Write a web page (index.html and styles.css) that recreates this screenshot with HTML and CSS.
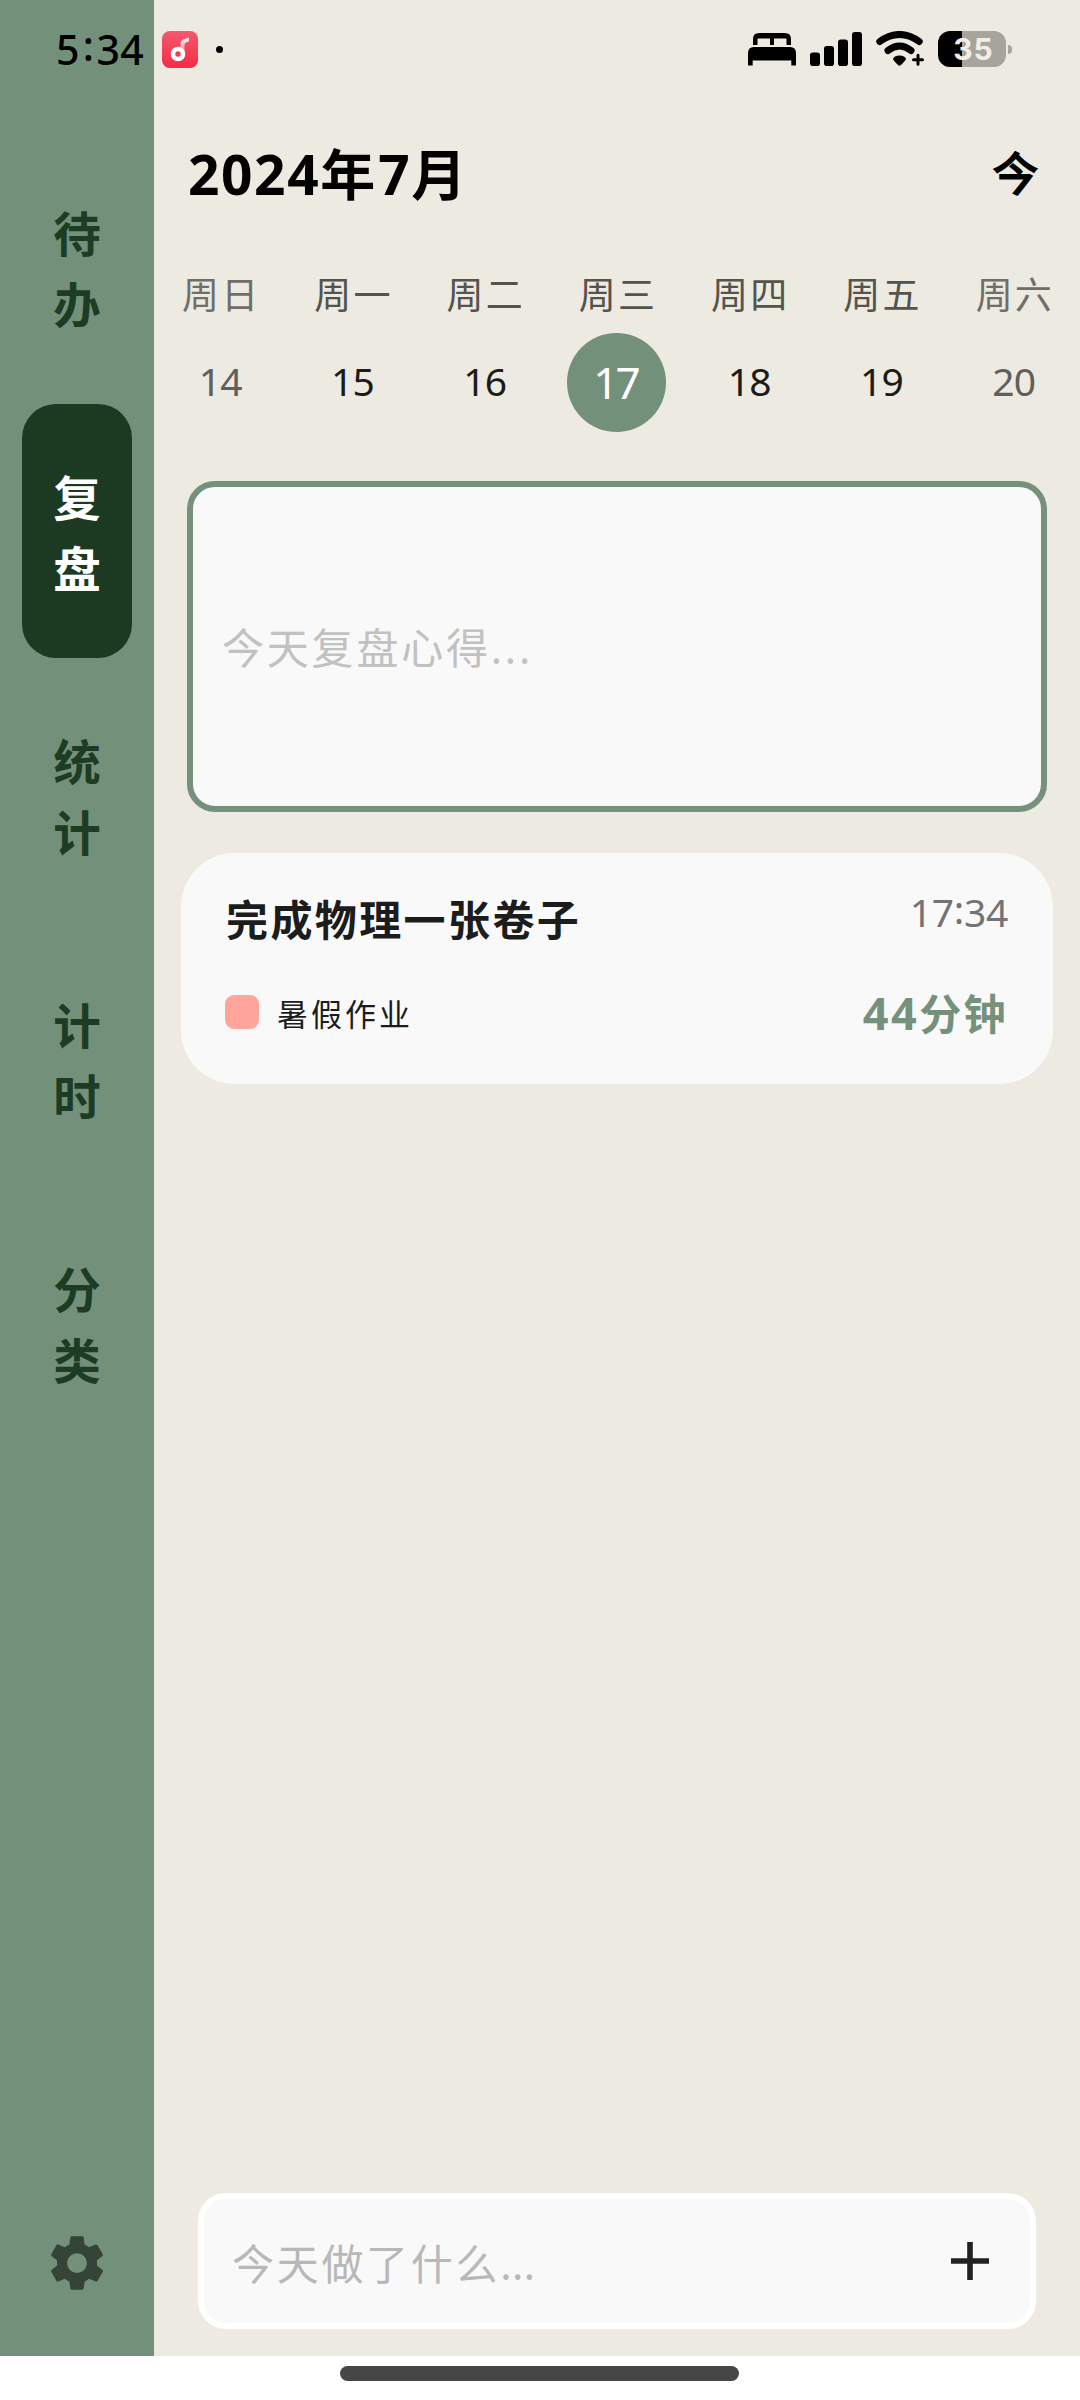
FILE: index.html
```html
<!DOCTYPE html>
<html lang="zh-CN">
<head>
<meta charset="utf-8">
<title>复盘</title>
<link rel="stylesheet" href="styles.css">
</head>
<body>
<div class="app">
  <div class="status">
    <span class="clock">5<span class="colon">:</span>34</span>
    <svg class="music" width="36" height="37" viewBox="0 0 36 37">
      <defs>
        <linearGradient id="red" x1="0" y1="0" x2="0" y2="1"><stop offset="0" stop-color="#f25a6c"/><stop offset="1" stop-color="#f52a48"/></linearGradient>
        <linearGradient id="stem" x1="0" y1="0" x2="0" y2="1"><stop offset="0" stop-color="#fff"/><stop offset="1" stop-color="#f88"/></linearGradient>
      </defs>
      <rect width="36" height="37" rx="8" fill="url(#red)"/>
      <path d="M18.500 18V13.500Q18.500 8.500 23 8L27 6.500V10.500L24 11.500Q22.500 12 22.500 14V20Z" fill="url(#stem)"/>
      <circle cx="16" cy="23" r="5" fill="none" stroke="#fff" stroke-width="4.600"/>
    </svg>
    <span class="dot"></span>
    <span class="spacer"></span>
    <svg class="bed" width="48" height="33" viewBox="0 0 48 33">
      <path d="M5 12V6Q5 0 11 0H37Q43 0 43 6V12H38.500V6.500Q38.500 5.500 37.500 5.500H26V12H22V5.500H10.500Q9.500 5.500 9.500 6.500V12Z"/>
      <path d="M0 32.500V20Q0 14 6 14H42Q48 14 48 20V32.500H43.300V27.500H4.700V32.500Z"/>
    </svg>
    <svg class="signal" width="52" height="34" viewBox="0 0 52 34">
      <rect y="20.500" width="10" height="13.500" rx="2.800"/><rect x="14" y="14" width="10" height="20" rx="2.800"/><rect x="28" y="7.500" width="10" height="26.500" rx="2.800"/><rect x="42" width="10" height="34" rx="2.800"/>
    </svg>
    <svg class="wifi" width="48" height="36" viewBox="0 0 48 36">
      <path d="M3.800 10.500Q23.500-3.500 43.200 10.500M12 19.500Q23.500 10.500 35 19.500" fill="none" stroke="#000" stroke-width="7" stroke-linecap="round"/>
      <path d="M17 28Q18 24.500 23.500 24.500Q29 24.500 30 28Q29.500 29.500 25 34Q23.500 35.500 22 34Q17.500 29.500 17 28Z"/>
      <path d="M37.500 28.800H46.500M42 24.300V33.300" stroke="#000" stroke-width="3" stroke-linecap="round"/>
    </svg>
    <span class="battery"><span class="level">35</span><span class="nub"></span></span>
  </div>

  <div class="body">
    <nav class="side">
      <a class="tab">待<br>办</a>
      <a class="tab active">复<br>盘</a>
      <a class="tab">统<br>计</a>
      <a class="tab">计<br>时</a>
      <a class="tab">分<br>类</a>
      <svg class="gear" width="64" height="64" viewBox="0 0 24 24"><path d="M19.430 12.980c.04-.32.07-.64.07-.98s-.03-.66-.07-.98l2.110-1.650c.19-.15.24-.42.12-.64l-2-3.460c-.12-.22-.39-.3-.61-.22l-2.490 1c-.52-.4-1.080-.73-1.690-.98l-.38-2.650C14.460 2.180 14.250 2 14 2h-4c-.25 0-.46.18-.49.42l-.38 2.650c-.61.25-1.170.59-1.690.98l-2.490-1c-.23-.09-.49 0-.61.22l-2 3.460c-.13.22-.07.49.12.64l2.110 1.650c-.04.32-.07.65-.07.98s.03.66.07.98l-2.110 1.650c-.19.15-.24.42-.12.64l2 3.460c.12.22.39.3.61.22l2.490-1c.52.4 1.080.73 1.690.98l.38 2.650c.03.24.24.42.49.42h4c.25 0 .46-.18.49-.42l.38-2.650c.61-.25 1.170-.59 1.690-.98l2.490 1c.23.09.49 0 .61-.22l2-3.460c.12-.22.07-.49-.12-.64l-2.110-1.650zM12 15.700c-2.040 0-3.700-1.660-3.700-3.700s1.660-3.700 3.700-3.700 3.700 1.660 3.700 3.700-1.660 3.700-3.700 3.700z"/></svg>
    </nav>

    <main class="main">
      <header class="head"><h1 class="month">2024<span class="unit">年</span>7<span class="unit">月</span></h1><span class="today">今</span></header>
      <div class="week">
        <div class="day off"><span class="name">周日</span><span class="num">14</span></div>
        <div class="day"><span class="name">周一</span><span class="num">15</span></div>
        <div class="day"><span class="name">周二</span><span class="num">16</span></div>
        <div class="day on"><span class="name">周三</span><span class="num">17</span></div>
        <div class="day"><span class="name">周四</span><span class="num">18</span></div>
        <div class="day"><span class="name">周五</span><span class="num">19</span></div>
        <div class="day off"><span class="name">周六</span><span class="num">20</span></div>
      </div>
      <div class="memo">今天复盘心得...</div>
      <section class="card">
        <div class="row top"><span class="task">完成物理一张卷子</span><span class="time">17<span class="colon">:</span>34</span></div>
        <div class="row"><span class="swatch"></span><span class="cat">暑假作业</span><span class="length"><span class="mins">44</span>分钟</span></div>
      </section>
      <div class="entry"><span>今天做了什么<span class="dots">...</span></span>
        <svg width="38" height="38" viewBox="0 0 38 38"><path d="M19 0V38M0 19H38" stroke="#212121" stroke-width="5.600"/></svg>
      </div>
    </main>
  </div>
  <footer class="home"><span class="handle"></span></footer>
</div>
</body>
</html>
```
FILE: styles.css
```css
* { box-sizing: border-box; }
body {
  margin: 0;
  background: #fff;
  font-family: "Noto Sans", "Noto Sans CJK SC", sans-serif;
}
.app { position: relative; width: 1080px; height: 2400px; display: flex; flex-direction: column; }
svg { display: block; flex: none; }
.colon { position: relative; top: -0.09em; }

/* status bar, over both columns */
.status {
  position: absolute; left: 0; top: 0; z-index: 1;
  width: 1080px; height: 98px; padding: 0 68px 0 55px;
  display: flex; align-items: center;
}
.clock { width: 107px; padding-left: 1px; font-size: 41px; line-height: 60px; font-weight: 500; letter-spacing: 0.4px; white-space: nowrap; }
.clock .colon { margin: 0 2px 0 3px; }
.dot { width: 7px; height: 7px; margin-left: 18px; border-radius: 50%; background: #000; }
.spacer { flex: 1; }
.signal { margin-left: 14px; }
.wifi { margin-left: 14px; }
.battery { display: flex; align-items: center; gap: 2px; margin-left: 14px; }
.level {
  width: 68px; height: 36px; border-radius: 12px;
  background: linear-gradient(90deg, #000 24px, #a6a49d 24px);
  color: #f0eee6; font: 700 30px/37px Inter, sans-serif; text-align: center;
  letter-spacing: 1px; padding-left: 3px;
}
.nub { width: 4px; height: 9px; border-radius: 0 5px 5px 0; background: #a6a49d; }

.body { height: 2356px; display: flex; }

/* sidebar */
.side {
  width: 154px; height: 100%; padding: 140px 0 61px;
  background: #73907a;
  display: flex; flex-direction: column; align-items: center; gap: 10px;
}
.tab {
  width: 110px; height: 254px; padding-top: 3px; border-radius: 34px;
  display: flex; align-items: center; justify-content: center;
  font-size: 47.5px; line-height: 71px; font-weight: 700; color: #1c3c23;
}
.tab.active { background: #1c3a22; color: #fff; }
.gear { margin-top: auto; fill: #344437; }

/* content */
.main { width: 926px; height: 100%; background: #eceae1; display: flex; flex-direction: column; }
.head { display: flex; justify-content: space-between; padding: 144px 42px 0 34px; height: 275px; }
.month { margin: 0; font-size: 55px; line-height: 60px; font-weight: 700; letter-spacing: 1.6px; }
.unit { letter-spacing: 3px; }
.today { font-size: 45px; line-height: 60px; font-weight: 400; -webkit-text-stroke: 2px #000; stroke-linejoin: round; }
.week { display: grid; grid-template-columns: repeat(7, 1fr); height: 206px; }
.day { display: flex; flex-direction: column; align-items: center; }
.name { height: 58px; font-size: 37px; line-height: 39px; letter-spacing: 2.200px; margin-right: -2px; color: #55534d; }
.num {
  width: 99px; height: 99px; border-radius: 50%;
  font-size: 39px; line-height: 96px; letter-spacing: -0.8px; text-align: center; color: #1b1b18;
}
.off .name { color: #706e69; }
.off .num { color: #605f5a; }
.on .num { background: #73907a; color: #fff; font-size: 44px; line-height: 99px; letter-spacing: -3px; padding-right: 3px; }

.memo {
  height: 331px; margin: 0 33px; padding: 0 30px 3px 29px;
  border: 6px solid #75917c; border-radius: 28px; background: #f9f9f9;
  display: flex; align-items: center;
  font-size: 42px; letter-spacing: 2.800px; color: #c1c1c1;
}
.card {
  height: 231px; margin: 41px 27px 0; padding: 36px 45px 0 44px;
  border-radius: 54px; background: #f9f9f9;
}
.row { display: flex; align-items: center; }
.row.top { justify-content: space-between; height: 62px; margin-bottom: 32px; }
.task { margin-left: 1px; font-size: 42px; line-height: 60px; font-weight: 700; letter-spacing: 2.400px; color: #1c1c1c; }
.time { align-self: flex-start; font-size: 39px; line-height: 46px; letter-spacing: -0.3px; color: #737373; }
.swatch { width: 34px; height: 34px; margin-bottom: 4px; border-radius: 9px; background: #ffa59b; }
.cat { margin-left: 18px; font-size: 31px; line-height: 60px; letter-spacing: 3px; color: #1c1c1c; }
.length { margin-left: auto; font-size: 42px; line-height: 60px; font-weight: 700; letter-spacing: 2.400px; color: #75917c; }
.mins { font-size: 45px; letter-spacing: 2.500px; }

.entry {
  height: 136px; margin: auto 44px 27px; padding: 0 41px 0 28px;
  border: 6px solid #fff; border-radius: 28px; background: #f9f9f9;
  display: flex; align-items: center; justify-content: space-between;
  font-size: 42px; letter-spacing: 2.700px; color: #b8b8b8;
}
.dots { letter-spacing: 0.5px; }

.home { height: 44px; padding: 10px 1px 0 0; background: #fff; display: flex; justify-content: center; }
.handle { width: 399px; height: 15px; border-radius: 8px; background: #464646; }
```
